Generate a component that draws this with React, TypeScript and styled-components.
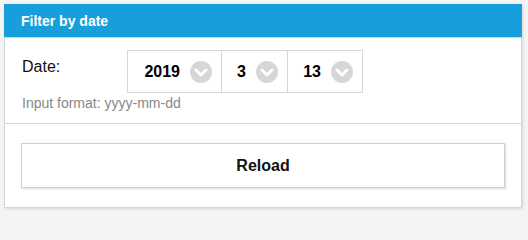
import React, { useState } from 'react';
import styled, { createGlobalStyle } from 'styled-components';

const GlobalStyle = createGlobalStyle`
  html, body {
    margin: 0;
    padding: 0;
    background: #f4f4f4;
    font-family: "Liberation Sans", Arial, sans-serif;
  }
`;

const Page = styled.div`
  padding: 4px 6px 8px 4px;
`;

const Panel = styled.div`
  background: #ffffff;
  border: 1px solid #d6d6d6;
  border-top: none;
  box-shadow: 1px 1px 3px rgba(0, 0, 0, 0.12);
  display: flex;
  flex-direction: column;
`;

const Header = styled.div`
  height: 34px;
  box-sizing: border-box;
  background: #169fdb;
  color: #ffffff;
  font-size: 14px;
  font-weight: bold;
  display: flex;
  align-items: center;
  padding: 0 17px;
  margin: 0 -1px;
  border-bottom: 1px solid #d6d6d6;
`;

const Body = styled.div`
  padding: 12px 17px 11px;
  border-bottom: 1px solid #d6d6d6;
`;

const Row = styled.div`
  display: flex;
  align-items: flex-start;
`;

const Label = styled.div`
  width: 105px;
  padding-top: 7px;
  font-size: 16px;
  line-height: 20px;
  color: #111;
`;

const SelectGroup = styled.div`
  display: flex;
  border: 1px solid #d6d6d6;
  height: 43px;
  box-sizing: border-box;
`;

const Cell = styled.div<{ $w: number }>`
  width: ${p => p.$w}px;
  box-sizing: border-box;
  display: flex;
  align-items: center;
  justify-content: flex-end;
  padding-right: 9px;
  gap: 10px;
  font-size: 16px;
  font-weight: bold;
  color: #000;
  & + & {
    border-left: 1px solid #d6d6d6;
  }
`;

const Hint = styled.div`
  margin-top: 2px;
  font-size: 14px;
  line-height: 17px;
  color: #888888;
`;

const Footer = styled.div`
  padding: 19px 16px 19px 16px;
`;

const ReloadButton = styled.button`
  display: block;
  width: 484px;
  height: 45px;
  background: #ffffff;
  border: 1px solid #d0d0d0;
  box-shadow: 1px 1px 2px rgba(0, 0, 0, 0.15);
  font-family: "Liberation Sans", Arial, sans-serif;
  font-size: 16px;
  font-weight: bold;
  color: #111;
  cursor: pointer;
`;

const Chevron = () => (
  <svg width="22" height="22" viewBox="0 0 22 22">
    <circle cx="11" cy="11" r="11" fill="#d6d6d6" />
    <path d="M6 9 L11 14 L16 9" fill="none" stroke="#ffffff" strokeWidth="3" strokeLinecap="round" strokeLinejoin="round" />
  </svg>
);

const App = () => {
  const [date] = useState({ y: 2019, m: 3, d: 13 });
  return (
    <Page>
      <GlobalStyle />
      <Panel>
        <Header>Filter by date</Header>
        <Body>
          <Row>
            <Label>Date:</Label>
            <SelectGroup>
              <Cell $w={93}>{date.y}<Chevron /></Cell>
              <Cell $w={66}>{date.m}<Chevron /></Cell>
              <Cell $w={75}>{date.d}<Chevron /></Cell>
            </SelectGroup>
          </Row>
          <Hint>Input format: yyyy-mm-dd</Hint>
        </Body>
        <Footer>
          <ReloadButton>Reload</ReloadButton>
        </Footer>
      </Panel>
    </Page>
  );
};

export default App;
